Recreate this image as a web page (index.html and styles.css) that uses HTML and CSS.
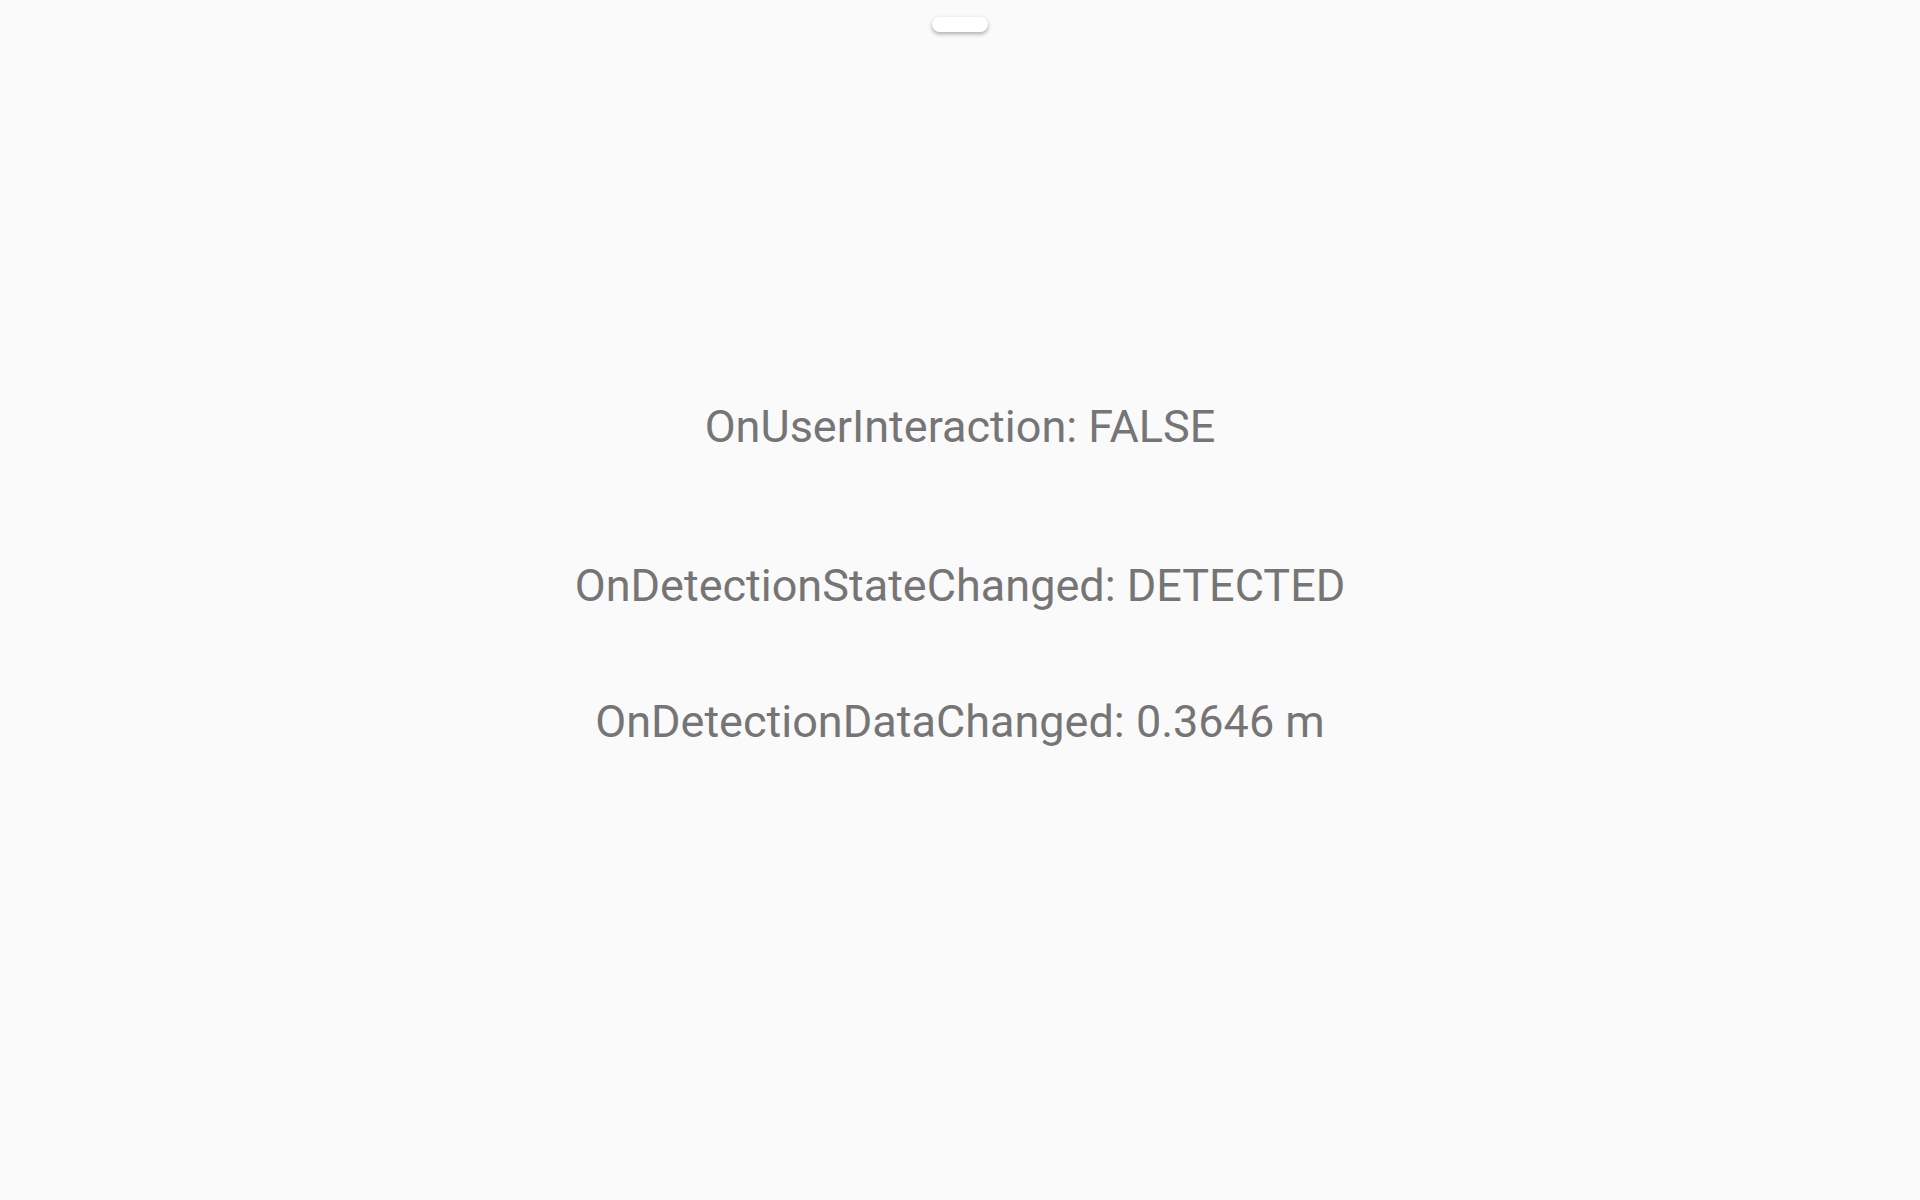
FILE: index.html
```html
<!DOCTYPE html>
<html>
<head>
<meta charset="utf-8">
<link rel="stylesheet" href="styles.css">
</head>
<body>
<div class="screen">
  <div class="handle"></div>
  <div class="content">
    <div class="line line-first">OnUserInteraction: FALSE</div>
    <div class="line line-second">OnDetectionStateChanged: DETECTED</div>
    <div class="line line-third">OnDetectionDataChanged: 0.3646 m</div>
  </div>
</div>
</body>
</html>
```
FILE: styles.css
```css
html, body {
  margin: 0;
  padding: 0;
  background: #fafafa;
}
.screen {
  width: 1920px;
  height: 1200px;
  display: flex;
  flex-direction: column;
  align-items: center;
  font-family: Roboto, "Liberation Sans", sans-serif;
}
.handle {
  margin-top: 17px;
  width: 56px;
  height: 15px;
  border-radius: 8px;
  background: #ffffff;
  box-shadow: 0 2px 4px rgba(0, 0, 0, 0.32);
}
.content {
  margin-top: 367px;
  display: flex;
  flex-direction: column;
  align-items: center;
}
.line {
  font-size: 45px;
  line-height: 56px;
  color: #757575;
  white-space: nowrap;
}
.line-second {
  margin-top: 103px;
}
.line-third {
  margin-top: 80px;
}
```
